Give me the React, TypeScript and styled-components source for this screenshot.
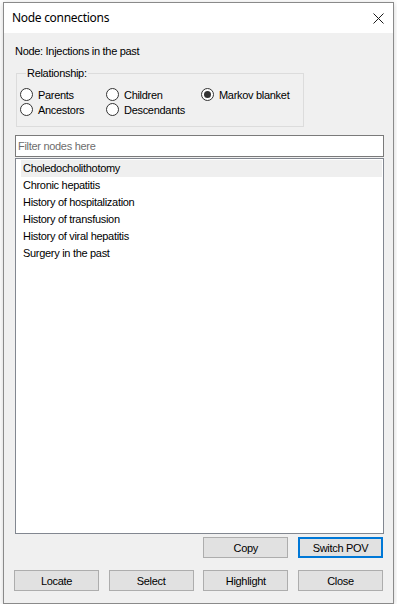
import React, { useState } from 'react';
import styled, { createGlobalStyle } from 'styled-components';

const GlobalStyle = createGlobalStyle`
  html, body {
    margin: 0;
    padding: 0;
    background: #ffffff;
  }
  body {
    font-family: "Liberation Sans", Arial, sans-serif;
    font-size: 11px;
    letter-spacing: -0.3px;
    color: #000;
  }
`;

const Page = styled.div`
  padding: 2px 0 0 3px;
`;

const Window = styled.div`
  width: 391px;
  height: 602px;
  box-sizing: border-box;
  border: 1px solid #8a8a8a;
  background: #f0f0f0;
  display: flex;
  flex-direction: column;
  box-shadow: 0 1px 6px rgba(0, 0, 0, 0.18);
`;

const TitleBar = styled.div`
  height: 30px;
  flex: none;
  background: #ffffff;
  display: flex;
  align-items: center;
  justify-content: space-between;
  padding: 0 9px 0 8px;
`;

const Title = styled.span`
  font-family: "Noto Sans", "Open Sans", sans-serif;
  font-size: 12px;
  letter-spacing: -0.3px;
  color: #000;
  padding-bottom: 1px;
`;

const CloseIcon = styled.svg`
  width: 11px;
  height: 11px;
  display: block;
`;

const Body = styled.div`
  flex: 1;
  display: flex;
  flex-direction: column;
  padding: 12px 9px 0 11px;
`;

const NodeLabel = styled.div`
  line-height: 13px;
  height: 13px;
`;

const Group = styled.fieldset`
  margin: 9px 0 0 1px;
  width: 288px;
  box-sizing: border-box;
  border: 1px solid #dcdcdc;
  padding: 7px 0 9px 3px;
`;

const Legend = styled.legend`
  margin-left: 6px;
  padding: 0 1px;
  line-height: 13px;
  height: 13px;
`;

const RadioGrid = styled.div`
  display: grid;
  grid-template-columns: 86px 95px auto;
  grid-auto-rows: 15px;
`;

const RadioItem = styled.label`
  display: flex;
  align-items: center;
  gap: 5px;
  cursor: default;
  white-space: nowrap;
`;

const RadioCircle = styled.span<{ $checked: boolean }>`
  width: 13px;
  height: 13px;
  box-sizing: border-box;
  border-radius: 50%;
  border: 1px solid #333333;
  background: #ffffff;
  display: flex;
  align-items: center;
  justify-content: center;
  flex: none;

  &::after {
    content: '';
    width: 7px;
    height: 7px;
    border-radius: 50%;
    background: #333333;
    display: ${(p) => (p.$checked ? 'block' : 'none')};
  }
`;

const FilterInput = styled.input`
  margin-top: 8px;
  height: 22px;
  box-sizing: border-box;
  width: 100%;
  border: 1px solid #7a7a7a;
  background: #ffffff;
  padding: 0 2px;
  font-family: "Liberation Sans", Arial, sans-serif;
  font-size: 11px;
  letter-spacing: -0.3px;
  outline: none;

  &::placeholder {
    color: #6d6d6d;
  }
`;

const NodeList = styled.ul`
  list-style: none;
  margin: 1px 0 0 0;
  height: 376px;
  box-sizing: border-box;
  border: 1px solid #828790;
  background: #ffffff;
  padding: 1px 1px 1px 5px;
`;

const NodeItem = styled.li<{ $selected: boolean }>`
  height: 17px;
  line-height: 17px;
  padding-left: 2px;
  background: ${(p) => (p.$selected ? '#efefef' : 'transparent')};
  white-space: nowrap;
`;

const ButtonGrid = styled.div<{ $top: number }>`
  display: grid;
  grid-template-columns: repeat(4, 85px);
  justify-content: space-between;
  margin: ${(p) => p.$top}px 1px 0 -1px;
`;

const Button = styled.button<{ $col?: number; $default?: boolean }>`
  grid-column: ${(p) => p.$col ?? 'auto'};
  height: 21px;
  box-sizing: border-box;
  background: #e1e1e1;
  border: 1px solid ${(p) => (p.$default ? '#0078d7' : '#adadad')};
  box-shadow: ${(p) => (p.$default ? 'inset 0 0 0 1px #0078d7' : 'none')};
  font-family: "Liberation Sans", Arial, sans-serif;
  font-size: 11px;
  letter-spacing: -0.3px;
  color: #000;
  padding: 0;
  cursor: default;
`;

const relationships = [
  ['Parents', 'Children', 'Markov blanket'],
  ['Ancestors', 'Descendants'],
];

const nodes = [
  'Choledocholithotomy',
  'Chronic hepatitis',
  'History of hospitalization',
  'History of transfusion',
  'History of viral hepatitis',
  'Surgery in the past',
];

export default function App() {
  const [relation, setRelation] = useState('Markov blanket');
  const [selected, setSelected] = useState(0);

  return (
    <>
      <GlobalStyle />
      <Page>
        <Window>
          <TitleBar>
            <Title>Node connections</Title>
            <CloseIcon viewBox="0 0 11 11">
              <path d="M0.5 0.5 L10.5 10.5 M10.5 0.5 L0.5 10.5" stroke="#1a1a1a" strokeWidth="1" fill="none" />
            </CloseIcon>
          </TitleBar>
          <Body>
            <NodeLabel>Node: Injections in the past</NodeLabel>
            <Group>
              <Legend>Relationship:</Legend>
              <RadioGrid>
                {relationships.flat().map((r) => (
                  <RadioItem key={r} onClick={() => setRelation(r)}>
                    <RadioCircle $checked={relation === r} />
                    {r}
                  </RadioItem>
                ))}
              </RadioGrid>
            </Group>
            <FilterInput placeholder="Filter nodes here" />
            <NodeList>
              {nodes.map((n, i) => (
                <NodeItem key={n} $selected={selected === i} onClick={() => setSelected(i)}>
                  {n}
                </NodeItem>
              ))}
            </NodeList>
            <ButtonGrid $top={3}>
              <Button $col={3}>Copy</Button>
              <Button $col={4} $default>Switch POV</Button>
            </ButtonGrid>
            <ButtonGrid $top={12}>
              <Button>Locate</Button>
              <Button>Select</Button>
              <Button>Highlight</Button>
              <Button>Close</Button>
            </ButtonGrid>
          </Body>
        </Window>
      </Page>
    </>
  );
}
